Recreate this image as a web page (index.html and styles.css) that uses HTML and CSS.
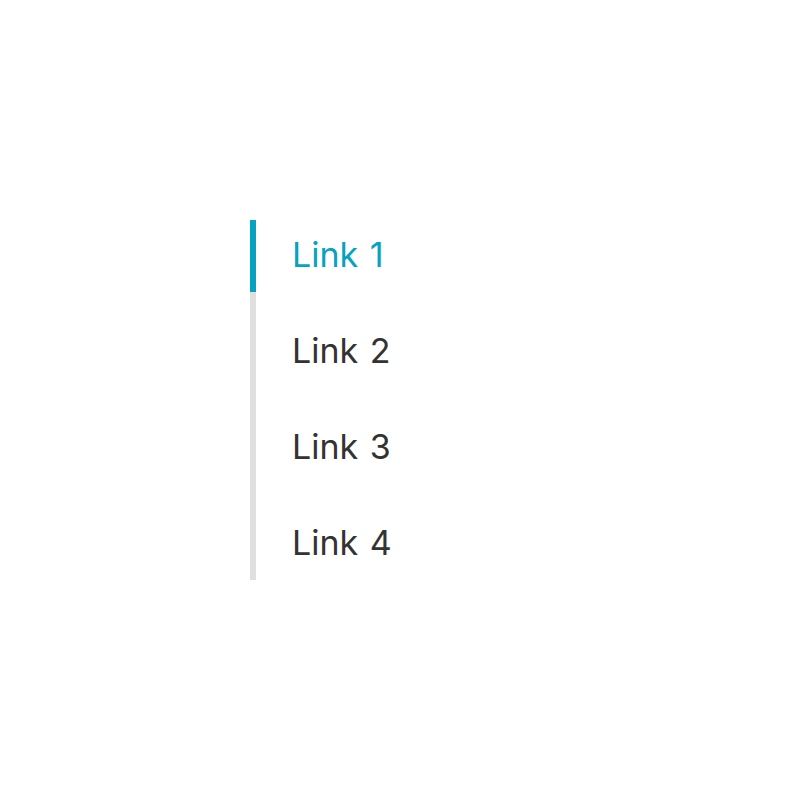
FILE: index.html
```html
<!DOCTYPE html>
<html>
<head>
<meta charset="utf-8">
<link rel="stylesheet" href="styles.css">
</head>
<body>
<nav class="tabs">
  <a class="tab active" href="#">Link 1</a>
  <a class="tab" href="#">Link 2</a>
  <a class="tab" href="#">Link 3</a>
  <a class="tab" href="#">Link 4</a>
</nav>
</body>
</html>
```
FILE: styles.css
```css
html, body {
  margin: 0;
  padding: 0;
  background: #ffffff;
}
body {
  width: 800px;
  height: 800px;
  padding: 220px 0 0 250px;
  box-sizing: border-box;
  font-family: Inter, "Noto Sans", sans-serif;
}
.tabs {
  display: flex;
  flex-direction: column;
  gap: 24px;
  width: 300px;
  border-left: 6px solid #dfdfdf;
  margin: 0;
}
.tab {
  display: flex;
  align-items: center;
  box-sizing: border-box;
  height: 72px;
  padding: 0 0 3px 36px;
  margin-left: -6px;
  border-left: 6px solid transparent;
  font-size: 34px;
  word-spacing: 2px;
  color: #333333;
  text-decoration: none;
}
.tab.active {
  border-left-color: #05a3c1;
  color: #05a3c1;
}
```
